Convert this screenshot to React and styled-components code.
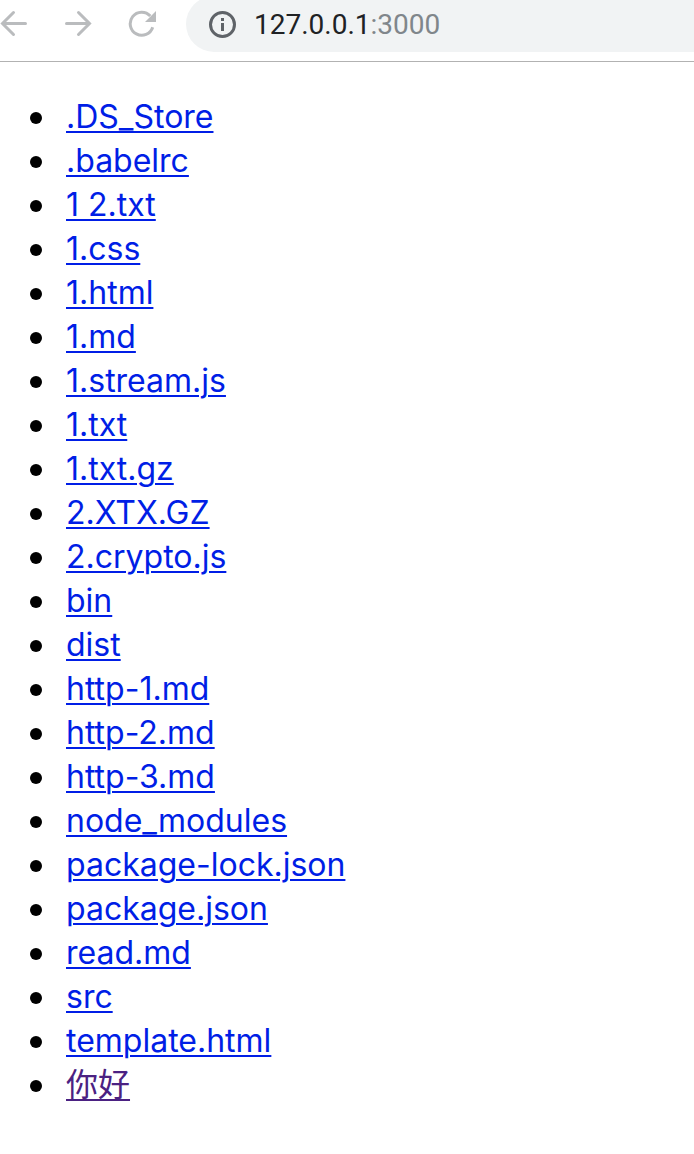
import React from "react";
import styled, { createGlobalStyle } from "styled-components";

const GlobalStyle = createGlobalStyle`
  body {
    margin: 0;
    background: #fff;
    font-family: Inter, "Noto Sans CJK SC", sans-serif;
  }
`;

const Toolbar = styled.header`
  display: flex;
  align-items: flex-start;
  height: 61px;
  overflow: hidden;
  border-bottom: 1px solid #b2b2b2;
`;

const Nav = styled.nav`
  display: flex;
  gap: 36px;
  padding-top: 10px;
  flex: none;
  width: 186px;
`;

const IconButton = styled.button`
  width: 28px;
  height: 28px;
  padding: 0;
  border: 0;
  background: none;
  color: #babcbe;
  flex: none;

  svg {
    display: block;
  }
`;

const AddressBar = styled.div`
  flex: 1;
  display: flex;
  align-items: center;
  height: 56px;
  margin-top: -4px;
  padding-left: 22px;
  border-radius: 28px 0 0 28px;
  background: #f1f3f4;
`;

const SiteInfo = styled(IconButton)`
  color: #5f6368;
  margin-right: 18px;
`;

const AddressInput = styled.input`
  field-sizing: content;
  padding: 2px 0 0;
  border: 0;
  outline: 0;
  background: none;
  font: 28px/36px Roboto, sans-serif;
  color: ${(p) => (p.$muted ? "#80868b" : "#202124")};
`;

const FileList = styled.ul`
  margin: 0;
  padding: 34px 16px 46px 30px;
  list-style: none;
`;

const FileItem = styled.li`
  display: flex;
  align-items: center;
  gap: 24px;
  height: 44px;
  font-size: 32px;
  line-height: 40px;

  &::before {
    content: "";
    width: 12px;
    height: 12px;
    border-radius: 50%;
    background: #000;
    flex: none;
  }
`;

const FileLink = styled.a`
  padding-bottom: 2px;
  color: ${(p) => (p.$visited ? "#4b2182" : "#001ee6")};
  text-decoration: underline;
  text-decoration-thickness: 2px;
  text-underline-offset: 3px;
`;

const files = [
  ".DS_Store",
  ".babelrc",
  "1 2.txt",
  "1.css",
  "1.html",
  "1.md",
  "1.stream.js",
  "1.txt",
  "1.txt.gz",
  "2.XTX.GZ",
  "2.crypto.js",
  "bin",
  "dist",
  "http-1.md",
  "http-2.md",
  "http-3.md",
  "node_modules",
  "package-lock.json",
  "package.json",
  "read.md",
  "src",
  "template.html",
  "你好",
];

const visited = new Set(["你好"]);

const strokeProps = {
  width: 28,
  height: 28,
  viewBox: "0 0 28 28",
  fill: "none",
  stroke: "currentColor",
  strokeWidth: 3,
};

const BackIcon = () => (
  <svg {...strokeProps} strokeLinecap="round">
    <path d="M25.5 13.5H3M13.5 2.5L2.5 13.5L13.5 24.5" />
  </svg>
);

const ForwardIcon = () => (
  <svg {...strokeProps} strokeLinecap="round">
    <path d="M2.5 13.5H25M14.5 2.5L25.5 13.5L14.5 24.5" />
  </svg>
);

const ReloadIcon = () => (
  <svg {...strokeProps}>
    <path d="M24.7 17.2A11.5 11.5 0 1 1 22.3 6.1" />
    <path d="M28 1V12H17Z" fill="currentColor" stroke="none" />
  </svg>
);

const InfoIcon = () => (
  <svg {...strokeProps}>
    <circle cx="14.5" cy="14.5" r="12" />
    <path d="M14.5 13V21M14.5 8V11" />
  </svg>
);

export default function App() {
  return (
    <>
      <GlobalStyle />
      <Toolbar>
        <Nav>
          <IconButton aria-label="Back">
            <BackIcon />
          </IconButton>
          <IconButton aria-label="Forward">
            <ForwardIcon />
          </IconButton>
          <IconButton aria-label="Reload">
            <ReloadIcon />
          </IconButton>
        </Nav>
        <AddressBar>
          <SiteInfo aria-label="Site information">
            <InfoIcon />
          </SiteInfo>
          <AddressInput aria-label="Host" defaultValue="127.0.0.1" />
          <AddressInput aria-label="Port" defaultValue=":3000" $muted />
        </AddressBar>
      </Toolbar>
      <main>
        <FileList>
          {files.map((name) => (
            <FileItem key={name}>
              <FileLink href={`/${encodeURIComponent(name)}`} $visited={visited.has(name)}>
                {name}
              </FileLink>
            </FileItem>
          ))}
        </FileList>
      </main>
    </>
  );
}
